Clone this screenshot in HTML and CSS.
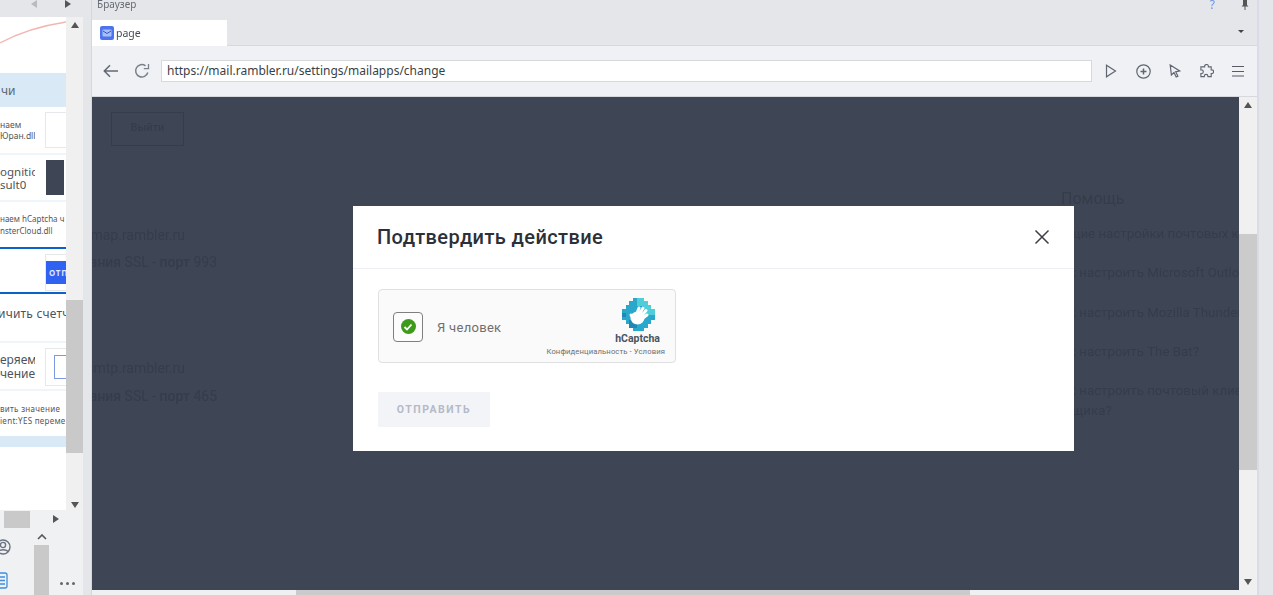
FILE: index.html
```html
<!DOCTYPE html>
<html lang="ru">
<head>
<meta charset="utf-8">
<title>Браузер</title>
<link rel="stylesheet" href="styles.css">
</head>
<body>
<div class="app">
  <aside class="side">
    <div class="side-top">
      <span class="tri tri-left faint"></span>
      <span class="tri tri-right"></span>
    </div>
    <div class="side-mid">
      <div class="canvas">
        <div class="curve-row">
          <svg class="curve" width="66" height="56" viewBox="0 0 66 56"><path d="M0 26 C20 15 40 9 66 5" fill="none" stroke="#f3b5b1" stroke-width="1.4"/></svg>
        </div>
        <div class="group-head"><span>чи</span></div>
        <div class="row row-a">
          <div class="lbl tiny"><span>наем</span><span>Юран.dll</span></div>
          <div class="box"></div>
        </div>
        <div class="row row-b">
          <div class="lbl med tight-lines"><span>ognitio</span><span>sult0</span></div>
          <div class="thumb-dark"></div>
        </div>
        <div class="row row-c">
          <div class="tiny-left"><span>наем hCaptcha ч</span><span>nsterCloud.dll</span></div>
        </div>
        <div class="row row-d">
          <div class="box box-btn"><span class="btn-mini">отп</span></div>
        </div>
        <div class="row row-e"><span class="counter">ичить счетч</span></div>
        <div class="row row-f">
          <div class="lbl med"><span>еряем</span><span>чение</span></div>
          <div class="box box-input"><span class="mini-input"></span></div>
        </div>
        <div class="row row-g">
          <div class="tiny-left spaced"><span>вить значение</span><span>ient:YES переме</span></div>
        </div>
        <div class="strip"></div>
      </div>
      <div class="vbar">
        <span class="tri tri-up"></span>
        <span class="vbar-thumb"></span>
        <span class="tri tri-down"></span>
      </div>
    </div>
    <div class="hbar">
      <span class="hbar-thumb"></span>
      <span class="tri tri-right"></span>
    </div>
    <div class="side-bottom">
      <div class="side-icons">
        <svg width="22" height="22" viewBox="0 0 22 22" fill="none" stroke="#6b7280" stroke-width="1.4"><circle cx="3" cy="11" r="7"/><circle cx="3" cy="9" r="2.6"/><path d="M-2 16c1-3 9-3 10 0"/></svg>
        <svg width="22" height="18" viewBox="0 0 22 18" fill="none" stroke="#3f8ee0" stroke-width="1.3"><rect x="-6" y="1" width="13" height="15" rx="2"/><path d="M0 5h5M0 8.500h5M0 12h5"/></svg>
      </div>
      <div class="mini-bar">
        <svg width="10" height="6" viewBox="0 0 10 6" fill="none" stroke="#555" stroke-width="1.6"><path d="M1 5l4-4 4 4"/></svg>
        <span class="mini-thumb"></span>
      </div>
      <div class="dots"><i></i><i></i><i></i></div>
    </div>
  </aside>

  <main class="browser">
    <div class="title-bar">
      <span class="title-text">Браузер</span>
      <span class="help">?</span>
      <svg class="pin" width="8" height="10" viewBox="0 0 8 10"><path d="M2 0h4v5l1.500 1.500h-7L2 5zM3.500 6.500h1V10h-1z" fill="#555"/></svg>
    </div>
    <div class="tab-bar">
      <div class="tab">
        <svg width="14" height="14" viewBox="0 0 14 14"><rect width="14" height="14" rx="2" fill="#4d74ec"/><rect x="2.500" y="3.500" width="9" height="7" rx="1" fill="#a9bdf6"/><path d="M3 5l4 2.500L11 5" fill="none" stroke="#2f55cf" stroke-width="1"/></svg>
        <span>page</span>
      </div>
      <span class="tri tri-down small"></span>
    </div>
    <div class="toolbar">
      <svg class="ico-back" width="16" height="14" viewBox="0 0 16 14" fill="none" stroke="#616873" stroke-width="1.500"><path d="M15 7H1.500M7 1.200L1.300 7 7 12.800"/></svg>
      <svg class="ico-reload" width="16" height="16" viewBox="0 0 16 16" fill="none" stroke="#7a808a" stroke-width="1.500"><path d="M13.800 9.500A6.200 6.200 0 1 1 11.500 2.800"/><path d="M9.800 5.600h4.700V.9" stroke-width="1.300"/></svg>
      <div class="url">https://mail.rambler.ru/settings/mailapps/change</div>
      <div class="tools">
        <svg width="14" height="14" viewBox="0 0 14 14" fill="none" stroke="#5f6672" stroke-width="1.200"><path d="M2.500 1.200l9 5.800-9 5.800z"/></svg>
        <svg width="15" height="15" viewBox="0 0 15 15" fill="none" stroke="#5f6672" stroke-width="1.200"><circle cx="7.500" cy="7.500" r="6.700"/><path d="M7.500 4.500v6M4.500 7.500h6" stroke-width="1.500"/></svg>
        <svg width="12" height="14" viewBox="0 0 12 14" fill="none" stroke="#5f6672" stroke-width="1.200"><path d="M1.200 1l9.500 6-4 .8 2.200 4.400-1.700.8-2.200-4.400L2.400 11z"/></svg>
        <svg width="15" height="15" viewBox="0 0 16 16" fill="none" stroke="#5f6672" stroke-width="1.200"><path d="M6 3V2.500a2 2 0 0 1 4 0V3h3v3.200h.6a2 2 0 0 1 0 4H13V13.500H9.500V13a1.900 1.900 0 0 0-3.800 0v.5H2V10.200h.6a2 2 0 0 0 0-4H2V3z"/></svg>
        <svg width="12" height="12" viewBox="0 0 12 12" fill="none" stroke="#555c68" stroke-width="1.100"><path d="M0 1.500h12M0 6.500h12M0 11h12"/></svg>
      </div>
    </div>
    <div class="view">
      <div class="viewport">
        <div class="ghost">
          <div class="ghost-left">
            <div class="ghost-btn">Выйти</div>
            <div class="ghost-line g1">imap.rambler.ru</div>
            <div class="ghost-line g2"><b>шифрования</b> SSL - <b>порт</b> 993</div>
            <div class="ghost-line g3">smtp.rambler.ru</div>
            <div class="ghost-line g4"><b>шифрования</b> SSL - <b>порт</b> 465</div>
          </div>
          <div class="ghost-right">
            <div class="help-title">Помощь</div>
            <div class="help-item">Общие настройки почтовых клиентов</div>
            <div class="help-item">Как настроить Microsoft Outlook?</div>
            <div class="help-item">Как настроить Mozilla Thunderbird?</div>
            <div class="help-item">Как настроить The Bat?</div>
            <div class="help-item last">Как настроить почтовый клиент для</div>
            <div class="help-item tight">ящика?</div>
          </div>
        </div>
        <div class="overlay">
          <div class="modal">
            <div class="modal-head">
              <h2>Подтвердить действие</h2>
              <svg width="16" height="16" viewBox="0 0 16 16" fill="none" stroke="#3c3f45" stroke-width="1.500"><path d="M1.500 1.500l13 13M14.500 1.500l-13 13"/></svg>
            </div>
            <div class="modal-body">
              <div class="captcha">
                <div class="check"><span class="check-dot"><svg width="10" height="8" viewBox="0 0 10 8" fill="none" stroke="#fff" stroke-width="1.800"><path d="M1.500 4l2.500 2.500 4.500-5"/></svg></span></div>
                <span class="human">Я человек</span>
                <div class="brand">
                  <svg class="hlogo" width="33" height="33" viewBox="0 0 33 33">
                    <path d="M11 0h11v3h4v4h3v4h4v11h-4v4h-3v4h-4v3H11v-3H7v-4H4v-4H0V11h4V7h3V3h4z" fill="#2aa8cc"/>
                    <path d="M15 0h7v3h4v4h3v4h4v6H22V8h-7z" fill="#4fcdd8"/>
                    <path d="M7 22h4v4h4v4h-8zM0 15h4v4H0z" fill="#2387b6"/>
                    <g fill="none" stroke="#fff" stroke-width="3" stroke-linecap="round">
                      <path d="M14 18l3-8M16.500 18l4.500-8M18.500 19l5.500-6.500M19.500 21l5.500-4M12 21L9 17"/>
                    </g>
                    <ellipse cx="15.500" cy="20" rx="7" ry="6.500" fill="#fff"/>
                  </svg>
                  <span class="hname">hCaptcha</span>
                  <span class="hlinks">Конфиденциальность - Условия</span>
                </div>
              </div>
              <div class="send">ОТПРАВИТЬ</div>
            </div>
          </div>
        </div>
      </div>
      <div class="page-bar">
        <span class="tri tri-up"></span>
        <span class="page-thumb"></span>
        <span class="tri tri-down"></span>
      </div>
    </div>
    <div class="page-hbar"><span class="page-hthumb"></span></div>
  </main>

  <div class="edge"></div>
</div>
</body>
</html>
```
FILE: styles.css
```css
* { box-sizing: border-box; }
html, body { margin: 0; height: 100%; overflow: hidden; }
body { font-family: "Noto Sans", sans-serif; color: #555; background: #e4e6ea; }
.app { display: flex; width: 1273px; height: 595px; filter: blur(0.45px); }

.tri { display: block; width: 0; height: 0; border-style: solid; border-color: transparent; flex: none; }
.tri-up { border-width: 0 4px 6px; border-bottom-color: #555; }
.tri-down { border-width: 6px 4px 0; border-top-color: #555; }
.tri-right { border-width: 4px 0 4px 6px; border-left-color: #555; }
.tri-left { border-width: 4px 6px 4px 0; border-right-color: #555; }
.tri.faint { border-right-color: #bbb; }
.tri.small { border-width: 3px 3.500px 0; border-top-color: #444; }

.side { width: 92px; flex: none; display: flex; flex-direction: column; border-right: 1px solid #d5d7dd; background: #e4e6ea; }
.side-top { height: 17px; display: flex; align-items: flex-start; gap: 28px; padding: 0 0 0 31px; }
.side-mid { height: 493px; display: flex; width: 83px; }
.canvas { width: 66px; background: #fff; overflow: hidden; flex: none; }
.vbar { width: 17px; background: #f0f0f0; display: flex; flex-direction: column; align-items: center; }
.vbar .tri-up { margin-top: 5px; }
.vbar-thumb { width: 17px; height: 153px; margin-top: 272px; background: #c9c9c9; }
.vbar .tri-down { margin-top: 49px; }

.curve-row { height: 56px; }
.curve { display: block; }
.group-head { height: 34px; background: #d9e9f6; display: flex; align-items: center; font-size: 12px; color: #5f6670; }
.group-head span { margin-left: 1px; }
.row { display: flex; align-items: center; border-bottom: 2px solid #eef5fb; }
.row-a { height: 48px; }
.row-b { height: 47px; }
.row-c { height: 47px; border-bottom: 2px solid #0d62c9; padding-top: 1px; }
.row-d { height: 45px; justify-content: flex-end; border-bottom: 2px solid #0d62c9; }
.row-e { height: 49px; padding-bottom: 9px; }
.row-f { height: 48px; padding-top: 2px; }
.row-g { height: 46px; border-bottom: 0; padding-top: 1px; }
.lbl { width: 35px; margin-right: 10px; flex: none; display: flex; flex-direction: column; align-items: flex-start; overflow: hidden; white-space: nowrap; }
.lbl.tiny { font-size: 8.500px; line-height: 11px; color: #555; }
.lbl.med { font-size: 12px; line-height: 14px; color: #4c535c; }
.lbl.tight-lines { font-size: 11.500px; line-height: 13px; }
.tiny-left { display: flex; flex-direction: column; font-size: 8px; line-height: 12px; white-space: nowrap; color: #555; align-items: flex-start; width: 66px; overflow: hidden; }
.tiny-left.spaced { letter-spacing: .3px; }
.box { flex: 1; align-self: center; height: 36px; border: 1px solid #e6e8ec; border-right: 0; background: #fff; }
.thumb-dark { width: 18px; height: 35px; background: #3e4655; margin-left: 1px; flex: none; }
.box-btn { flex: none; width: 21px; height: 37px; margin-top: 4px; display: flex; align-items: center; overflow: hidden; }
.btn-mini { width: 20px; height: 23px; background: #2f62f0; color: #dfe6ff; font: 700 8px/23px "Noto Sans", sans-serif; padding-left: 3px; white-space: nowrap; overflow: hidden; letter-spacing: .8px; text-transform: uppercase; }
.counter { font-size: 12px; letter-spacing: .2px; color: #4c535c; white-space: nowrap; margin-left: -2px; }
.box-input { height: 38px; padding-left: 8px; display: flex; align-items: center; }
.mini-input { width: 14px; height: 24px; border: 1px solid #7d97e0; border-right: 0; }
.strip { height: 11px; background: #d9e9f6; margin-top: -1px; }

.hbar { height: 18px; width: 83px; display: flex; align-items: center; padding-left: 4px; gap: 23px; background: #f0f1f3; }
.hbar-thumb { width: 26px; height: 17px; background: #c9c9c9; }
.side-bottom { flex: 1; display: flex; width: 83px; background: #f0f1f3; }
.side-icons { width: 34px; display: flex; flex-direction: column; gap: 14px; padding-top: 8px; }
.side-icons svg { display: block; }
.mini-bar { width: 15px; display: flex; flex-direction: column; align-items: center; padding-top: 6px; gap: 5px; }
.mini-thumb { width: 15px; flex: 1; background: #c9c9c9; }
.dots { flex: 1; display: flex; gap: 3px; padding: 0 0 10px 11px; align-items: flex-end; }
.dots i { width: 3px; height: 3px; border-radius: 50%; background: #666; }

.browser { width: 1165px; flex: none; display: flex; flex-direction: column; }
.title-bar { height: 17px; display: flex; align-items: flex-start; padding-left: 5px; font-size: 10px; line-height: 8px; color: #666c75; background: #e4e6ea; }
.title-text { flex: 1; }
.help { color: #6a94e6; font-size: 12px; line-height: 9px; margin-right: 26px; }
.pin { margin-right: 8px; }
.tab-bar { height: 29px; display: flex; align-items: flex-start; justify-content: space-between; padding: 3px 13px 0 0; background: #e4e6ea; border-bottom: 1px solid #d6d8dd; }
.tab { width: 135px; height: 26px; background: #fff; display: flex; align-items: center; gap: 2px; padding-left: 8px; font-size: 10.500px; color: #474d56; }
.tab-bar .tri { margin-top: 10px; }
.toolbar { height: 50px; display: flex; align-items: center; background: #f0f1f5; padding: 0 13px 0 11px; }
.ico-reload { margin-left: 15px; }
.url { width: 931px; height: 22px; margin-left: 11px; background: #fff; border: 1px solid #d8d9dd; font-size: 12px; line-height: 20px; padding-left: 5px; color: #3a3f46; white-space: nowrap; flex: none; }
.tools { display: flex; align-items: center; gap: 18px; padding-left: 12px; }

.view { flex: 1; display: flex; min-height: 0; }
.viewport { position: relative; width: 1147px; background: #3e4655; overflow: hidden; border-top: 1px solid #d6d8dd; }
.ghost { display: flex; justify-content: space-between; height: 100%; color: #363c4a; font-family: "Roboto", sans-serif; font-size: 14px; filter: blur(0.6px); }
.ghost-left { width: 125px; padding-top: 15px; display: flex; flex-direction: column; align-items: flex-end; white-space: nowrap; }
.ghost-btn { width: 73px; height: 34px; margin-right: 33px; border: 1px solid #363c4a; text-align: center; line-height: 30px; font-size: 11px; font-weight: 500; }
.ghost-line { line-height: 20px; }
.ghost-line b { font-weight: 500; }
.g1 { margin-top: 79px; margin-right: 32px; }
.g2 { margin-top: 7px; }
.g3 { margin-top: 86px; margin-right: 32px; }
.g4 { margin-top: 8px; }
.ghost-right { width: 199px; padding-top: 91px; white-space: nowrap; overflow: hidden; }
.help-title { font-size: 16px; line-height: 22px; margin-left: 21px; margin-bottom: 14px; }
.help-item { font-size: 13.300px; line-height: 20px; margin-bottom: 19.250px; padding-left: 13px; }
.help-item.last { margin-bottom: 0; }
.help-item.tight { padding-left: 25px; }

.overlay { position: absolute; inset: 0; padding: 109px 0 0 261px; }
.modal { width: 721px; height: 245px; background: #fff; }
.modal-head { height: 63px; display: flex; align-items: center; justify-content: space-between; padding: 0 24px 0 24px; border-bottom: 1px solid #eceef1; }
.modal-head h2 { margin: 0; font: 500 20px/24px "Roboto", sans-serif; color: #2c3038; letter-spacing: .4px; }
.modal-body { padding: 20px 25px 0; }
.captcha { width: 298px; height: 74px; background: #fafafa; border: 1px solid #e0e0e0; border-radius: 4px; display: flex; align-items: center; padding-left: 14px; position: relative; }
.check { width: 30px; height: 30px; margin-top: 1px; background: #fcfcfc; border: 1px solid #7f7f7f; border-radius: 4px; display: flex; align-items: center; justify-content: center; }
.check-dot { width: 15px; height: 15px; border-radius: 50%; background: #3c9b18; display: flex; align-items: center; justify-content: center; }
.human { margin: 2px 0 0 14px; font: 400 13px "Roboto", sans-serif; color: #6f6f6f; letter-spacing: .3px; }
.brand { position: absolute; right: 10px; top: 8px; display: flex; flex-direction: column; align-items: flex-end; }
.hlogo { display: block; margin-right: 10px; }
.hname { font: 700 10.500px/12px "Roboto", sans-serif; color: #4a5560; margin-top: 2px; margin-right: 5px; }
.hlinks { font: 400 7.700px/12px "Roboto", sans-serif; color: #6f6f6f; margin-top: 1px; white-space: nowrap; letter-spacing: .1px; }
.send { width: 112px; height: 35px; margin-top: 29px; background: #f3f4f7; color: #b4bac8; font: 700 10.500px/35px "Roboto", sans-serif; letter-spacing: 1.500px; text-align: center; }

.page-bar { flex: 1; display: flex; flex-direction: column; align-items: center; background: #f0f0f0; border-top: 1px solid #d6d8dd; }
.page-bar .tri-up { margin-top: 5px; }
.page-thumb { width: 18px; height: 236px; margin-top: 126px; background: #cbcbcb; }
.page-bar .tri-down { margin-top: 109px; }
.page-hbar { height: 5px; background: #eef0f2; padding-left: 204px; }
.page-hthumb { display: block; width: 674px; height: 5px; background: #cbcbcb; }

.edge { flex: 1; background: #e4e6ea; border-left: 2px solid #d9dce6; }
```
